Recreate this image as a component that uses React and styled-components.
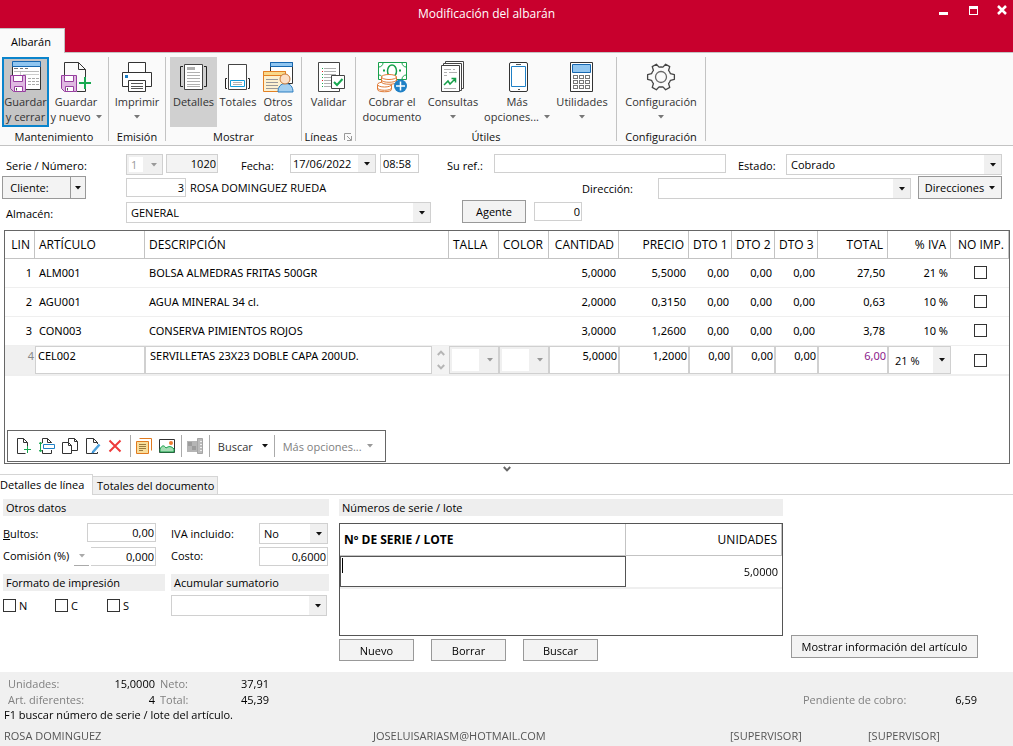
import React from "react";
import styled, { createGlobalStyle, css } from "styled-components";

const Global = createGlobalStyle`
  *, *::before, *::after { box-sizing: border-box; }
  body { margin: 0; background: #fff; }
  body, button, input, select, textarea {
    font-family: "Open Sans", "Noto Sans", sans-serif;
    font-size: 11px;
    line-height: 15px;
    color: #000;
  }
  button, input, select, textarea { margin: 0; border-radius: 0; outline: none; }
  svg { display: block; flex: none; }
`;

const Window = styled.div`
  display: flex;
  flex-direction: column;
  min-height: 100vh;
  min-width: 1000px;
`;

/* ---------- title bar ---------- */
const TitleBar = styled.header`
  display: grid;
  grid-template-columns: 1fr auto 1fr;
  grid-template-rows: 28px 25px;
  background: #c8002d;
  border-bottom: 1px solid #c3c3c3;
  height: 53px;
`;
const Title = styled.h1`
  grid-column: 2;
  margin: 0;
  padding-right: 40px;
  font-size: 12px;
  font-weight: 400;
  line-height: 28px;
  color: #fff;
  text-align: center;
  white-space: nowrap;
`;
const WindowButtons = styled.div`
  grid-column: 3;
  display: flex;
  justify-content: flex-end;
  gap: 14px;
  padding: 2px 1px 0 0;
`;
const WindowButton = styled.button`
  width: 16px;
  height: 16px;
  padding: 0;
  border: 0;
  background: none;
`;
const RibbonTab = styled.button`
  grid-row: 2;
  grid-column: 1;
  justify-self: start;
  width: 65px;
  height: 25px;
  padding: 0 2px 0 0;
  border: 1px solid #c3c3c3;
  border-width: 1px 1px 0 0;
  background: #fafafa;
`;

/* ---------- ribbon ---------- */
const Ribbon = styled.nav`
  display: flex;
  height: 93px;
  padding: 4px 0;
  background: #fafafa;
  border-bottom: 1px solid #c3c3c3;
`;
const Group = styled.section`
  display: flex;
  flex-direction: column;
  width: ${(p) => p.$w}px;
  border-right: 1px solid #c3c3c3;
`;
const GroupButtons = styled.div`
  display: flex;
  justify-content: ${(p) => p.$align || "center"};
  padding-left: ${(p) => (p.$align ? 2 : 0)}px;
  gap: ${(p) => p.$gap || 0}px;
`;
const GroupName = styled.div`
  display: flex;
  align-items: center;
  justify-content: center;
  gap: 7px;
  height: 15px;
  margin-top: 2px;
  white-space: nowrap;
  color: #111;
`;
const BigButton = styled.button`
  display: flex;
  flex-direction: column;
  align-items: center;
  width: ${(p) => p.$w}px;
  height: 70px;
  padding: 4px 0 0;
  border: 0;
  background: ${(p) => (p.$on ? "#d0d0d0" : "none")};
  color: #333;
  white-space: nowrap;
  & > svg { margin-bottom: 1px; }
  ${(p) =>
    p.$focus &&
    css`
      background: #c5c5c5;
      border: 2px solid #0a84cc;
      padding-top: 2px;
    `}
`;
const Line = styled.span`
  display: flex;
  align-items: center;
  gap: 5px;
  height: 15px;
`;

/* ---------- form controls ---------- */
const Row = styled.div`
  display: flex;
  align-items: flex-start;
`;
const Label = styled.label`
  flex: none;
  width: ${(p) => p.$w}px;
  padding-left: ${(p) => p.$pl || 0}px;
  padding-top: ${(p) => p.$pt || 0}px;
  white-space: nowrap;
`;
const Field = styled.input`
  width: ${(p) => (p.$w ? p.$w + "px" : "auto")};
  flex: ${(p) => (p.$w ? "none" : "1 1 0")};
  min-width: 0;
  height: 19px;
  padding: 0 ${(p) => (p.$right ? 1 : 2)}px;
  border: 1px solid #d0d0d0;
  background: ${(p) => (p.readOnly ? "#f3f3f3" : "#fff")};
  text-align: ${(p) => (p.$right ? "right" : "left")};
  ${(p) => p.$openLeft && "border-left: 0;"}
`;
const ComboBox = styled.span`
  display: grid;
  grid-template-columns: 1fr 17px;
  width: ${(p) => (p.$w ? p.$w + "px" : "auto")};
  flex: ${(p) => (p.$w ? "none" : "1 1 0")};
  height: ${(p) => p.$h || 21}px;
  border: 1px solid #d0d0d0;
  background: ${(p) => (p.$off ? "#f0f0f0" : "#fff")};
`;
const NativeSelect = styled.select`
  grid-area: 1 / 1 / 2 / 3;
  appearance: none;
  min-width: 0;
  width: 100%;
  padding: 0 17px 0 ${(p) => p.$pl || 4}px;
  border: 0;
  background: transparent;
  opacity: 1;
  &:disabled { color: #999; }
`;
const ComboArrow = styled.span`
  grid-area: 1 / 2;
  display: grid;
  place-items: center;
  background: #f0f0f0;
  pointer-events: none;
`;
const DisabledPatch = styled.span`
  grid-area: 1 / 1;
  margin: 2px;
  background: #fff;
`;
const PushButton = styled.button`
  display: flex;
  align-items: center;
  justify-content: center;
  gap: 5px;
  flex: none;
  width: ${(p) => p.$w}px;
  height: ${(p) => p.$h || 23}px;
  padding: 0;
  border: 1px solid #999;
  background: #f3f3f3;
  white-space: nowrap;
`;
const SplitButton = styled.div`
  display: flex;
  width: 84px;
  height: 23px;
  border: 1px solid #999;
  & > button {
    display: grid;
    place-items: center;
    padding: 0;
    border: 0;
    background: #f3f3f3;
  }
  & > button:first-child { width: 67px; padding-right: 14px; }
  & > button:last-child { flex: 1; border-left: 1px solid #999; }
`;
const Check = styled.input`
  appearance: none;
  width: 13px;
  height: 13px;
  border: 1px solid #333;
  background: #fff;
  flex: none;
  display: block;
`;

/* ---------- document header ---------- */
const DocForm = styled.form`
  display: flex;
  flex-direction: column;
  height: 84px;
  padding: 8px 11px 0 0;
`;
const FormRow = styled(Row)`
  height: ${(p) => p.$h}px;
`;
const Spaced = styled.span`
  display: flex;
  flex: ${(p) => (p.$grow ? "1 1 0" : "none")};
  margin-left: ${(p) => p.$ml || 0}px;
  margin-top: ${(p) => p.$mt || 0}px;
  width: ${(p) => (p.$w ? p.$w + "px" : "auto")};
`;

/* ---------- lines grid ---------- */
const GridPanel = styled.section`
  display: flex;
  flex-direction: column;
  justify-content: space-between;
  flex: 1;
  margin: 0 3px 0 4px;
  border: 1px solid #666;
`;
const Table = styled.table`
  width: 100%;
  table-layout: fixed;
  border-collapse: separate;
  border-spacing: 0;
`;
const Th = styled.th`
  height: 28px;
  padding: 0 4px;
  border-right: 1px solid #c3c3c3;
  border-bottom: 1px solid #c3c3c3;
  font-size: 12px;
  font-weight: 400;
  text-align: ${(p) => p.$align || "left"};
  white-space: nowrap;
`;
const Td = styled.td`
  height: 29px;
  padding: 0 3px 1px 4px;
  border-bottom: 1px solid #efefef;
  font-family: "Noto Sans", "Open Sans", sans-serif;
  text-align: ${(p) => p.$align || "left"};
  white-space: nowrap;
`;
const EditTd = styled.td`
  height: 30px;
  padding: 0;
  border-bottom: 2px solid #efefef;
  background: ${(p) => (p.$grey ? "#f0f0f0" : "#fff")};
  color: ${(p) => (p.$grey ? "#888" : "#000")};
  font-family: "Noto Sans", "Open Sans", sans-serif;
  text-align: right;
  vertical-align: top;
`;
const LineNo = styled.span`
  display: block;
  padding: 2px 1px 0 0;
`;
const CellInput = styled.input`
  display: block;
  width: 100%;
  height: 28px;
  padding: 0 ${(p) => (p.$left ? 4 : 1)}px 9px ${(p) => (p.$pl || 1)}px;
  border: 1px solid #d0d0d0;
  font-family: "Noto Sans", "Open Sans", sans-serif;
  text-align: ${(p) => (p.$left ? "left" : "right")};
  color: ${(p) => p.$color || "#000"};
`;
const CellFlex = styled.div`
  display: flex;
  align-items: stretch;
  height: 28px;
  & > input { flex: 1; min-width: 0; }
`;
const Spinner = styled.span`
  display: flex;
  flex-direction: column;
  justify-content: space-around;
  align-items: center;
  width: 17px;
  background: #f3f3f3;
`;
const CellCheck = styled.span`
  display: grid;
  justify-content: center;
  padding-top: ${(p) => p.$pt || 0}px;
`;

const GridToolbar = styled.div`
  display: flex;
  align-items: center;
  align-self: flex-start;
  width: 379px;
  height: 32px;
  margin: 0 0 1px 2px;
  padding: 0 5px;
  border: 1px solid #666;
`;
const ToolButton = styled.button`
  display: flex;
  align-items: center;
  gap: ${(p) => p.$gap || 0}px;
  padding: 0;
  margin: 0 4px 0 3px;
  border: 0;
  background: none;
  color: ${(p) => p.$color || "#333"};
  white-space: nowrap;
`;
const ToolSep = styled.span`
  width: 1px;
  height: 22px;
  margin: 0 2px;
  background: #aaa;
`;
const Collapse = styled.div`
  display: flex;
  justify-content: center;
  height: 10px;
  padding-top: 2px;
`;

/* ---------- lower tabs ---------- */
const Tabs = styled.div`
  display: flex;
  align-items: flex-end;
  height: 21px;
  border-bottom: 1px solid #d5d5d5;
`;
const Tab = styled.button`
  width: ${(p) => p.$w}px;
  height: ${(p) => (p.$active ? 21 : 18)}px;
  margin-bottom: ${(p) => (p.$active ? -1 : 0)}px;
  padding: 0 0 ${(p) => (p.$active ? 1 : 0)}px ${(p) => (p.$active ? 0 : 4)}px;
  border: 1px solid #d5d5d5;
  border-width: 1px 1px 0 0;
  background: ${(p) => (p.$active ? "#fff" : "#f0f0f0")};
  text-align: left;
  white-space: nowrap;
`;
const Details = styled.div`
  display: flex;
  height: 177px;
  padding: 4px 0 0 3px;
`;
const LeftPane = styled.div`
  width: 326px;
  flex: none;
`;
const SectionName = styled.h2`
  height: 17px;
  margin: 0;
  padding-left: 3px;
  background: #eee;
  font-size: 11px;
  font-weight: 400;
  line-height: 17px;
`;
const Pair = styled.div`
  display: grid;
  grid-template-columns: 162px 158px;
  column-gap: 6px;
  margin-top: ${(p) => p.$mt || 0}px;
`;
const ComisionPick = styled.button`
  display: grid;
  place-items: center;
  width: 15px;
  height: 19px;
  margin: 0 2px 0 0;
  padding: 0;
  border: 0;
  border-bottom: 1px solid #aaa;
  background: none;
`;
const Checks = styled.div`
  display: flex;
  padding-top: 8px;
  & > label {
    display: flex;
    align-items: center;
    gap: 3px;
    width: 52px;
    height: 13px;
  }
`;
const LotPane = styled.div`
  flex: 1;
  max-width: 444px;
  margin-left: 10px;
`;
const LotBox = styled.div`
  height: 113px;
  margin-top: 7px;
  border: 1px solid #555;
`;
const LotTh = styled(Th)`
  height: 32px;
  font-weight: ${(p) => (p.$bold ? 700 : 400)};
`;
const LotTd = styled.td`
  height: 33px;
  padding: 0 ${(p) => (p.$num ? 4 : 0)}px 0 0;
  border-bottom: 2px solid #efefef;
  text-align: right;
  vertical-align: ${(p) => (p.$num ? "middle" : "top")};
`;
const LotInput = styled.input`
  display: block;
  width: 100%;
  height: 31px;
  border: 1px solid #555;
  padding: 2px 2px 12px;
  caret-color: transparent;
  &:focus {
    background: linear-gradient(#000, #000) 1px 1px / 1px 15px no-repeat;
  }
`;
const ButtonRow = styled.div`
  display: flex;
  gap: 17px;
  margin-top: 3px;
`;
const InfoPane = styled.div`
  padding: 136px 0 0 8px;
`;

/* ---------- footer ---------- */
const Footer = styled.footer`
  height: 74px;
  background: #f0f0f0;
  padding-top: 3px;
`;
const Summary = styled.div`
  display: grid;
  grid-template-columns: 88px 59px 5px 60px 49px 1fr 110px 64px;
  grid-template-rows: 16px 16px;
  align-items: center;
  padding: 0 36px 0 8px;
`;
const Muted = styled.span`
  grid-column: ${(p) => p.$c};
  color: #808080;
  white-space: nowrap;
`;
const Amount = styled.span`
  grid-column: ${(p) => p.$c};
  text-align: right;
`;
const Hint = styled.p`
  margin: 0;
  padding-left: 4px;
  line-height: 16px;
`;
const Status = styled.div`
  display: grid;
  grid-template-columns: 369px 357px 138px 1fr;
  padding: 5px 0 0 4px;
  line-height: 16px;
  color: #555;
`;

/* ---------- icons ---------- */
const Svg = ({ s = 32, w, h, children, ...r }) => (
  <svg width={w || s} height={h || s} viewBox={`0 0 ${w || s} ${h || s}`} fill="none" aria-hidden="true" {...r}>
    {children}
  </svg>
);
const Caret = ({ color = "#111" }) => (
  <Svg w={6} h={4}>
    <path d="M0 0h6L3 3.5z" fill={color} />
  </Svg>
);
const Chevron = ({ up, color = "#b5b5b5" }) => (
  <Svg w={8} h={6}>
    <path d={up ? "M.8 5 4 1.6 7.2 5" : "M.8 1 4 4.4 7.2 1"} stroke={color} strokeWidth="2" />
  </Svg>
);
const Floppy = ({ x, y }) => (
  <g transform={`translate(${x} ${y})`} stroke="#963f9f">
    <path d="M.5.5h15v16H3.500l-3-3z" fill="#dfb9e1" />
    <path d="M3.500.5h9v6h-9z" fill="#fff" />
    <path d="M4.500 11.500h8v5h-8z" fill="#fff" />
    <path d="M6.500 13v2.500" stroke="#555" />
  </g>
);
const lines = (x1, x2, ys, color = "#b0b0b0") =>
  ys.map((y) => <path key={y} d={`M${x1} ${y + 0.5}H${x2}`} stroke={color} />);

const IconSaveClose = () => (
  <Svg>
    <path d="M2.500 1.500h28v27h-28z" fill="#fff" stroke="#333" />
    <path d="M2.500.5h28v5h-28z" fill="#91c6f0" stroke="#1667b0" />
    <path d="M4 7.500h4m2 0h3m2 0h3" stroke="#777" />
    {lines(4, 29, [10], "#bbb")}
    <path d="M10.500 11v3M13 13.500h16" stroke="#ccc" />
    <path d="M18 17.500h11M18 20.500h11M18 23.500h11" stroke="#aaa" strokeDasharray="3 1" />
    <Floppy x={0} y={14} />
  </Svg>
);
const IconSaveNew = () => (
  <Svg>
    <path d="M4.500 15V1.500h14l7 7V16M25.500 28v2.500H17" fill="none" stroke="#333" />
    <path d="M18.500 1.500v7h7" stroke="#333" />
    <Floppy x={1} y={14} />
    <path d="M25 16v12M19 22h12" stroke="#17a850" strokeWidth="2" />
  </Svg>
);
const IconPrint = () => (
  <Svg>
    <g stroke="#333" fill="#fff">
      <path d="M7.500 1.500h17v10h-17z" />
      <path d="M1.500 11.500h29v14h-29z" />
      <path d="M7.500 19.500h17v11h-17z" />
    </g>
    {lines(10, 22, [22, 25, 27], "#555")}
    <path d="M4 14h3v3H4z" fill="#1a7cc4" />
  </Svg>
);
const IconDetail = () => (
  <Svg>
    <path d="M5 5.500H2.500v20H5M26 5.500h2.500v20H26" stroke="#222" />
    <path d="M6.500 3.500h18v25h-18z" fill="#fff" stroke="#444" />
    <path d="M9 6h8v3H9z" fill="#b0b0b0" />
    {lines(9, 22, [11, 14, 17, 20, 23, 25])}
  </Svg>
);
const IconTotals = () => (
  <Svg>
    <path d="M5 17.500H3.500v10H5M26 17.500h1.500v10H26" stroke="#222" />
    <path d="M6.500 3.500h18v25h-18z" fill="#fff" stroke="#444" />
    <path d="M8.500 19.500h14v6h-14z" stroke="#149edb" fill="#fff" />
    {lines(11, 20, [21, 23])}
  </Svg>
);
const IconOther = () => (
  <Svg>
    <path d="M8.500 1.500h22v21h-22z" fill="#fff" stroke="#333" />
    <path d="M8.500 1.500h22v4h-22z" fill="#91c6f0" stroke="#1667b0" />
    <path d="M1.500 10.500h22v20h-22z" fill="#fdf1d0" stroke="#e38124" />
    <path d="M1.500 10.500h22v4h-22z" fill="#f9d98a" stroke="#e38124" />
    {lines(4, 16, [18, 21, 24, 27], "#999")}
    <path d="M16 31c0-5 2.500-8.500 7.500-8.500S31 26 31 31z" fill="#a4cff0" stroke="#2b7cc0" />
    <circle cx="23" cy="18" r="5" fill="#fce0c8" stroke="#c8793a" />
  </Svg>
);
const IconValidate = () => (
  <Svg>
    <path d="M26.500 14V1.500h-21v29h21V27" fill="#fff" stroke="#444" />
    <path d="M11 7.500h12M11 10.500h12M11 13.500h12M11 16.500h7M11 19.500h7M11 22.500h7M11 25.500h7" stroke="#b0b0b0" />
    {[7, 10, 13, 16, 19, 22, 25].map((y, i) => (
      <path key={y} d={`M9 ${y}h1v1H9z`} fill={[1, 4].includes(i) ? "#d22" : "#17a850"} />
    ))}
    <path d="M18.500 14.500h13v13h-13z" fill="#fff" stroke="#444" />
    <path d="m21 21 3 3 5.500-6" stroke="#17a850" strokeWidth="2" />
  </Svg>
);
const IconCash = () => (
  <Svg>
    <path d="M2.500 1.500h28v17h-28z" fill="#fff" stroke="#17a04a" />
    <path d="M3 6c2 0 4-2 4-4M30 6c-2 0-4-2-4-4M3 14c2 0 4 2 4 4M30 14c-2 0-4 2-4 4" stroke="#17a04a" />
    <ellipse cx="16" cy="10" rx="4.500" ry="6" stroke="#17a04a" strokeWidth="1.500" />
    <path d="M7 9.500h2M23 9.500h2" stroke="#17a04a" strokeWidth="2" />
    <g fill="#fff" stroke="#e07a35">
      <path d="M1.500 24v4.500c0 3 14 3 14 0V24z" />
      <path d="M1.500 27c0 3 14 3 14 0" fill="none" />
      <ellipse cx="8.500" cy="23.500" rx="7" ry="2.500" />
      <path d="M5.500 16v5c0 3 15 3 15 0v-5z" />
      <path d="M5.500 19c0 3 15 3 15 0" fill="none" />
      <ellipse cx="13" cy="16" rx="7.500" ry="2.500" />
    </g>
    <circle cx="24.500" cy="25" r="6.500" fill="#1f80c6" />
    <path d="M24.500 20.500v9M20 25h9" stroke="#fff" strokeWidth="1.500" />
  </Svg>
);
const IconQueries = () => (
  <Svg>
    <g fill="#fff" stroke="#444">
      <path d="M8.500.5h18v27h-18z" />
      <path d="M6.500 2.500h18v27h-18z" />
      <path d="M4.500 4.500h18v26h-18z" />
    </g>
    <path d="M7 8.500h7m2 0h2M7 11.500h3m2 0h8M7 14.500h3M7 27.500h12" stroke="#b0b0b0" />
    <path d="m7 24 4-4 2 3 5-5M14.500 17.500h4v4" stroke="#17a04a" strokeWidth="1.500" />
  </Svg>
);
const IconPhone = () => (
  <Svg>
    <rect x="8.500" y="1.500" width="18" height="29" rx="1.500" fill="#fff" stroke="#333" />
    <path d="M10.500 5.500h14v20h-14z" stroke="#1f80c6" />
    <path d="M15 3.500h5M17 28.500h2" stroke="#555" />
  </Svg>
);
const IconCalc = () => (
  <Svg>
    <path d="M4.500 1.500h22v29h-22z" fill="#fff" stroke="#333" />
    <path d="M6.500 3.500h18v8h-18z" fill="#91c6f0" stroke="#1667b0" />
    {[14.5, 19.5, 24.5].map((y) =>
      [7.5, 13.5, 19.5].map((x) => <rect key={x + "-" + y} x={x} y={y} width="4" height="3" stroke="#777" />)
    )}
  </Svg>
);
const gearPath = (() => {
  const pt = (r, deg) => {
    const a = (deg * Math.PI) / 180;
    return `${(16 + r * Math.cos(a)).toFixed(2)} ${(16 + r * Math.sin(a)).toFixed(2)}`;
  };
  let d = "";
  for (let i = 0; i < 6; i++) {
    const a = i * 60;
    d += `${i ? "L" : "M"}${pt(10, a - 19)}L${pt(13.6, a - 10)}L${pt(13.6, a + 10)}L${pt(10, a + 19)}A10 10 0 0 1 ${pt(10, a + 41)}`;
  }
  return d + "Z";
})();
const IconGear = () => (
  <Svg>
    <path d={gearPath} stroke="#444" strokeWidth="1.300" strokeLinejoin="round" />
    <circle cx="16" cy="16" r="5.500" stroke="#666" strokeWidth="1.300" />
  </Svg>
);
const IconLauncher = () => (
  <Svg s={8}>
    <path d="M.5 7V.5H7M3 3l4 4M7.500 3v4.500H3" stroke="#999" />
  </Svg>
);

const IconAdd = () => (
  <Svg s={16}>
    <path d="M11.500 8V4.500l-4-4h-6v15h8M7.500.5v4h4" stroke="#333" />
    <path d="M11.500 8v7M8 11.500h7" stroke="#17a850" />
  </Svg>
);
const IconInsert = () => (
  <Svg s={16}>
    <path d="M12.500 5V4.500l-4-4h-5V5M3.500 12v3.500h9V12M8.500.5v4h4" stroke="#333" />
    <path d="M4.500 6.500h11v4h-11z" stroke="#1f80c6" fill="#fff" />
    <path d="M1.500 4v9M0 6l1.500-2L3 6M0 12l1.500 2L3 12" stroke="#17a850" />
  </Svg>
);
const IconCopy = () => (
  <Svg s={16}>
    <path d="M9.500 12.500h6v-9l-3-3h-6v4M12.500.5v3h3" stroke="#333" />
    <path d="M.5 4.500h6l3 3v8h-9zM6.500 4.500v3h3" stroke="#333" fill="#fff" />
  </Svg>
);
const IconEdit = () => (
  <Svg s={16}>
    <path d="M12.500 6V4.500l-4-4h-7v15h11V14M8.500.5v4h4" stroke="#333" />
    <path d="m8 14 6.500-7.500" stroke="#4ba0dc" strokeWidth="2.500" />
    <path d="m7 15 1.500-.5-1-1z" fill="#2f87cc" stroke="#2f87cc" />
  </Svg>
);
const IconDelete = () => (
  <Svg s={16}>
    <path d="m1.500 2.500 11 11M12.500 2.500l-11 11" stroke="#ee3a3a" strokeWidth="2" />
  </Svg>
);
const IconNotes = () => (
  <Svg s={16}>
    <path d="M3.500.5h12v12" stroke="#e07a20" />
    <path d="M.5 3.500h12v12H.5z" fill="#f9dd9a" stroke="#e07a20" />
    <path d="M3 6.500h7M3 8.500h7M3 10.500h7M3 12.500h4" stroke="#9a7a40" />
  </Svg>
);
const IconImage = () => (
  <Svg s={16}>
    <path d="M.5 1.500h15v13H.5z" fill="#fff" stroke="#333" />
    <path d="M1 11c2-4 4-4 6-1 3-2 5-2 8 1v3H1z" fill="#a5dcb4" stroke="#17a04a" />
    <circle cx="12" cy="5" r="2" fill="#ee7a30" />
  </Svg>
);
const IconMeasure = () => (
  <Svg s={16}>
    <path d="M0 3h11v11H0z" fill="#b5b5b5" />
    <path d="M1 4h4v4H1zM5 8h4v4H5z" fill="#9c9c9c" />
    <path d="M10.500.5h5v15h-5z" fill="#bbb" stroke="#a5a5a5" />
    <path d="M13 3.500h2M13 6.500h2M13 9.500h2M13 12.500h2" stroke="#eee" />
  </Svg>
);

/* ---------- pieces ---------- */
const Combo = ({ id, value = "", w, h, off, label, pl }) => (
  <ComboBox $w={w} $h={h} $off={off}>
    {off && <DisabledPatch />}
    <NativeSelect id={id} aria-label={label} disabled={off} defaultValue={value} $pl={pl}>
      <option>{value}</option>
    </NativeSelect>
    <ComboArrow>
      <Caret color={off ? "#999" : "#111"} />
    </ComboArrow>
  </ComboBox>
);

const ComboCell = (props) => (
  <CellFlex>
    <Combo h={28} {...props} />
  </CellFlex>
);

const RibbonButton = ({ icon, l1, l2, menu, w, on, focus }) => (
  <BigButton $w={w} $on={on} $focus={focus}>
    {icon}
    <Line>{l1}</Line>
    <Line>
      {l2}
      {menu && <Caret color="#777" />}
    </Line>
  </BigButton>
);

const COLUMNS = [
  ["LIN", 30, "right"],
  ["ARTÍCULO", 110, "left"],
  ["DESCRIPCIÓN", null, "left"],
  ["TALLA", 50, "left"],
  ["COLOR", 50, "left"],
  ["CANTIDAD", 70, "right"],
  ["PRECIO", 70, "right"],
  ["DTO 1", 43, "right"],
  ["DTO 2", 43, "right"],
  ["DTO 3", 43, "right"],
  ["TOTAL", 70, "right"],
  ["% IVA", 63, "right"],
  ["NO IMP.", 58, "right"],
];
const ROWS = [
  ["1", "ALM001", "BOLSA ALMEDRAS FRITAS 500GR", "", "", "5,0000", "5,5000", "0,00", "0,00", "0,00", "27,50", "21 %"],
  ["2", "AGU001", "AGUA MINERAL 34 cl.", "", "", "2,0000", "0,3150", "0,00", "0,00", "0,00", "0,63", "10 %"],
  ["3", "CON003", "CONSERVA PIMIENTOS ROJOS", "", "", "3,0000", "1,2600", "0,00", "0,00", "0,00", "3,78", "10 %"],
];
const EDIT_AMOUNTS = [
  ["Cantidad", "5,0000"],
  ["Precio", "1,2000"],
  ["Dto 1", "0,00"],
  ["Dto 2", "0,00"],
  ["Dto 3", "0,00"],
  ["Total", "6,00", "#8b1a8b"],
];

export default function App() {
  return (
    <Window>
      <Global />
      <TitleBar>
        <Title>Modificación del albarán</Title>
        <WindowButtons>
          <WindowButton aria-label="Minimizar">
            <Svg s={16}><path d="M3 10h9v3H3z" fill="#fff" /></Svg>
          </WindowButton>
          <WindowButton aria-label="Maximizar">
            <Svg s={16}><path d="M3 4h9v9H3zM4 7v5h7V7z" fill="#fff" fillRule="evenodd" /></Svg>
          </WindowButton>
          <WindowButton aria-label="Cerrar">
            <Svg s={16}><path d="m2 4 8 8M10 4l-8 8" stroke="#fff" strokeWidth="2.500" /></Svg>
          </WindowButton>
        </WindowButtons>
        <RibbonTab>Albarán</RibbonTab>
      </TitleBar>

      <Ribbon>
        <Group $w={109}>
          <GroupButtons $align="flex-start" $gap={1}>
            <RibbonButton w={47} focus icon={<IconSaveClose />} l1="Guardar" l2="y cerrar" />
            <RibbonButton w={52} icon={<IconSaveNew />} l1="Guardar" l2="y nuevo" menu />
          </GroupButtons>
          <GroupName>Mantenimiento</GroupName>
        </Group>
        <Group $w={57}>
          <GroupButtons><RibbonButton w={50} icon={<IconPrint />} l1="Imprimir" menu /></GroupButtons>
          <GroupName>Emisión</GroupName>
        </Group>
        <Group $w={136}>
          <GroupButtons>
            <RibbonButton w={47} on icon={<IconDetail />} l1="Detalles" />
            <RibbonButton w={42} icon={<IconTotals />} l1="Totales" />
            <RibbonButton w={38} icon={<IconOther />} l1="Otros" l2="datos" />
          </GroupButtons>
          <GroupName>Mostrar</GroupName>
        </Group>
        <Group $w={54}>
          <GroupButtons><RibbonButton w={46} icon={<IconValidate />} l1="Validar" /></GroupButtons>
          <GroupName>Líneas <IconLauncher /></GroupName>
        </Group>
        <Group $w={261}>
          <GroupButtons>
            <RibbonButton w={64} icon={<IconCash />} l1="Cobrar el" l2="documento" />
            <RibbonButton w={58} icon={<IconQueries />} l1="Consultas" menu />
            <RibbonButton w={70} icon={<IconPhone />} l1="Más" l2="opciones..." menu />
            <RibbonButton w={60} icon={<IconCalc />} l1="Utilidades" menu />
          </GroupButtons>
          <GroupName>Útiles</GroupName>
        </Group>
        <Group $w={89}>
          <GroupButtons><RibbonButton w={80} icon={<IconGear />} l1="Configuración" menu /></GroupButtons>
          <GroupName>Configuración</GroupName>
        </Group>
      </Ribbon>

      <DocForm>
        <FormRow $h={22}>
          <Label $w={126} $pl={6} $pt={4} htmlFor="serie">Serie / Número:</Label>
          <Combo id="serie" value="1" w={37} off />
          <Spaced $ml={3}><Field $w={52} $right readOnly defaultValue="1020" aria-label="Número" /></Spaced>
          <Label $w={72} $pl={23} $pt={4} htmlFor="fecha">Fecha:</Label>
          <Combo id="fecha" value="17/06/2022" w={86} h={19} pl={2} />
          <Spaced $ml={4}><Field $w={39} defaultValue="08:58" aria-label="Hora" /></Spaced>
          <Label $w={75} $pl={28} $pt={4} htmlFor="ref">Su ref.:</Label>
          <Field id="ref" />
          <Label $w={60} $pl={12} $pt={4} htmlFor="estado">Estado:</Label>
          <Combo id="estado" value="Cobrado" w={216} />
        </FormRow>
        <FormRow $h={24}>
          <Spaced $ml={2} $w={124}>
            <SplitButton>
              <button type="button">Cliente:</button>
              <button type="button" aria-label="Más opciones de cliente"><Caret /></button>
            </SplitButton>
          </Spaced>
          <Spaced $mt={2}><Field $w={60} $right defaultValue="3" aria-label="Código de cliente" /></Spaced>
          <Spaced $grow $ml={4} $mt={4}>ROSA DOMINGUEZ RUEDA</Spaced>
          <Label $w={76} $pt={5} htmlFor="dir">Dirección:</Label>
          <Spaced $mt={2}><Combo id="dir" w={253} /></Spaced>
          <Spaced $ml={7}><PushButton type="button" $w={84}>Direcciones <Caret /></PushButton></Spaced>
        </FormRow>
        <FormRow $h={26}>
          <Label $w={126} $pl={6} $pt={6} htmlFor="almacen">Almacén:</Label>
          <Spaced $mt={2}><Combo id="almacen" value="GENERAL" w={305} /></Spaced>
          <Spaced $ml={31}><PushButton type="button" $w={64}>Agente</PushButton></Spaced>
          <Spaced $ml={8} $mt={2}><Field $w={48} $right defaultValue="0" aria-label="Agente" /></Spaced>
        </FormRow>
      </DocForm>

      <GridPanel>
        <Table>
          <colgroup>
            {COLUMNS.map(([n, w]) => <col key={n} width={w || undefined} />)}
          </colgroup>
          <thead>
            <tr>{COLUMNS.map(([n, , a]) => <Th key={n} $align={a}>{n}</Th>)}</tr>
          </thead>
          <tbody>
            {ROWS.map((r) => (
              <tr key={r[0]}>
                {r.map((c, i) => <Td key={i} $align={COLUMNS[i][2]}>{c}</Td>)}
                <Td><CellCheck><Check type="checkbox" aria-label={`No imprimir línea ${r[0]}`} /></CellCheck></Td>
              </tr>
            ))}
            <tr>
              <EditTd $grey><LineNo>4</LineNo></EditTd>
              <EditTd><CellInput $left $pl={2} defaultValue="CEL002" aria-label="Artículo" /></EditTd>
              <EditTd>
                <CellFlex>
                  <CellInput $left $pl={4} defaultValue="SERVILLETAS 23X23 DOBLE CAPA 200UD." aria-label="Descripción" />
                  <Spinner><Chevron up /><Chevron /></Spinner>
                </CellFlex>
              </EditTd>
              <EditTd><ComboCell off label="Talla" /></EditTd>
              <EditTd><ComboCell off label="Color" /></EditTd>
              {EDIT_AMOUNTS.map(([l, v, c]) => (
                <EditTd key={l}><CellInput defaultValue={v} aria-label={l} $color={c} /></EditTd>
              ))}
              <EditTd><ComboCell value="21 %" label="% IVA" pl={6} /></EditTd>
              <EditTd><CellCheck $pt={8}><Check type="checkbox" aria-label="No imprimir línea 4" /></CellCheck></EditTd>
            </tr>
          </tbody>
        </Table>
        <GridToolbar>
          <ToolButton aria-label="Nueva línea"><IconAdd /></ToolButton>
          <ToolButton aria-label="Insertar línea"><IconInsert /></ToolButton>
          <ToolButton aria-label="Duplicar"><IconCopy /></ToolButton>
          <ToolButton aria-label="Editar"><IconEdit /></ToolButton>
          <ToolButton aria-label="Eliminar"><IconDelete /></ToolButton>
          <ToolSep />
          <ToolButton aria-label="Notas"><IconNotes /></ToolButton>
          <ToolButton aria-label="Imagen"><IconImage /></ToolButton>
          <ToolSep />
          <ToolButton aria-label="Medidas"><IconMeasure /></ToolButton>
          <ToolSep />
          <ToolButton $gap={9}>&nbsp;Buscar <Caret /></ToolButton>
          <ToolSep />
          <ToolButton $gap={5} $color="#808080">&nbsp;Más opciones... <Caret color="#999" /></ToolButton>
        </GridToolbar>
      </GridPanel>
      <Collapse><Chevron color="#666" /></Collapse>

      <Tabs role="tablist">
        <Tab role="tab" $active $w={93}>Detalles de línea</Tab>
        <Tab role="tab" $w={125}>Totales del documento</Tab>
      </Tabs>

      <Details>
        <LeftPane>
          <SectionName>Otros datos</SectionName>
          <Pair $mt={7}>
            <Row>
              <Label $w={84} $pt={3} htmlFor="bultos"><u>B</u>ultos:</Label>
              <Field id="bultos" $w={69} $right defaultValue="0,00" />
            </Row>
            <Row>
              <Label $w={88} $pt={3} htmlFor="iva">IVA incluido:</Label>
              <Combo id="iva" value="No" w={69} />
            </Row>
          </Pair>
          <Pair $mt={3}>
            <Row>
              <Label $w={71} $pt={1} htmlFor="comision">Comisión (%)</Label>
              <ComisionPick type="button" aria-label="Tipo de comisión"><Caret color="#aaa" /></ComisionPick>
              <Field id="comision" $w={65} $right $openLeft defaultValue="0,000" />
            </Row>
            <Row>
              <Label $w={88} $pt={1} htmlFor="costo">Costo:</Label>
              <Field id="costo" $w={69} $right defaultValue="0,6000" />
            </Row>
          </Pair>
          <Pair $mt={8}>
            <div>
              <SectionName>Formato de impresión</SectionName>
              <Checks>
                {["N", "C", "S"].map((k) => (
                  <label key={k}><Check type="checkbox" />{k}</label>
                ))}
              </Checks>
            </div>
            <div>
              <SectionName>Acumular sumatorio</SectionName>
              <Spaced $mt={4}><Combo w={156} label="Acumular sumatorio" /></Spaced>
            </div>
          </Pair>
        </LeftPane>

        <LotPane>
          <SectionName>Números de serie / lote</SectionName>
          <LotBox>
            <Table>
              <colgroup><col /><col width="156" /></colgroup>
              <thead>
                <tr>
                  <LotTh $bold>Nº DE SERIE / LOTE</LotTh>
                  <LotTh $align="right">UNIDADES</LotTh>
                </tr>
              </thead>
              <tbody>
                <tr>
                  <LotTd><LotInput autoFocus aria-label="Nº de serie / lote" /></LotTd>
                  <LotTd $num>5,0000</LotTd>
                </tr>
              </tbody>
            </Table>
          </LotBox>
          <ButtonRow>
            <PushButton $w={75} $h={22}>Nuevo</PushButton>
            <PushButton $w={75} $h={22}>Borrar</PushButton>
            <PushButton $w={75} $h={22}>Buscar</PushButton>
          </ButtonRow>
        </LotPane>
        <InfoPane>
          <PushButton $w={187}>Mostrar información del artículo</PushButton>
        </InfoPane>
      </Details>

      <Footer>
        <Summary>
          <Muted $c={1}>Unidades:</Muted><Amount $c={2}>15,0000</Amount>
          <Muted $c={4}>Neto:</Muted><Amount $c={5}>37,91</Amount>
          <Muted $c={1}>Art. diferentes:</Muted><Amount $c={2}>4</Amount>
          <Muted $c={4}>Total:</Muted><Amount $c={5}>45,39</Amount>
          <Muted $c={7}>Pendiente de cobro:</Muted><Amount $c={8}>6,59</Amount>
        </Summary>
        <Hint>F1 buscar número de serie / lote del artículo.</Hint>
        <Status>
          <span>ROSA DOMINGUEZ</span>
          <span>JOSELUISARIASM@HOTMAIL.COM</span>
          <span>[SUPERVISOR]</span>
          <span>[SUPERVISOR]</span>
        </Status>
      </Footer>
    </Window>
  );
}
